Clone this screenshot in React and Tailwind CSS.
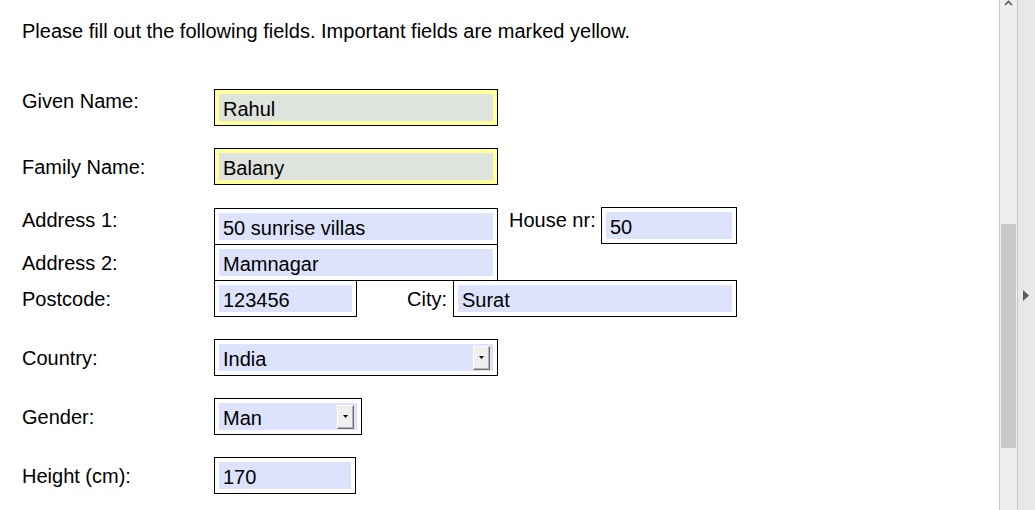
import React from 'react';

// Field box: black border, 4px ring (yellow for important ones), coloured inner field
function Field({ value, width, important, select, className = '' }) {
  const ring = important ? 'bg-[#ffff9c]' : 'bg-white';
  const inner = important ? 'bg-[#dfe3dd]' : 'bg-[#dde3fd]';
  return (
    <div className={`border border-black p-[4px] shrink-0 ${ring} ${width} ${className}`}>
      <div className={`h-[27px] flex items-center justify-between pl-[4px] pr-[3px] ${inner}`}>
        <span className="text-[20px] leading-[27px] pt-[3px] text-black whitespace-nowrap">{value}</span>
        {select && (
          <div className="w-[17px] h-[24px] bg-[#efefef] border-t border-l border-t-white border-l-white border-r border-b border-r-[#6d6d6d] border-b-[#6d6d6d] shadow-[inset_-1px_-1px_0_#b4b4b4] flex items-center justify-center">
            <svg width="5" height="3" viewBox="0 0 5 3">
              <path d="M0 0h5L2.5 3z" fill="#000" />
            </svg>
          </div>
        )}
      </div>
    </div>
  );
}

function Label({ children, top }) {
  return (
    <div className={`w-[192px] shrink-0 text-[20px] leading-[23px] pt-[1px] text-black ${top ? 'self-start' : ''}`}>
      {children}
    </div>
  );
}

export default function App() {
  return (
    <div className="w-[1035px] h-[510px] overflow-hidden flex bg-white" style={{ fontFamily: '"Liberation Sans", Arial, sans-serif' }}>
      <div className="w-[999px] shrink-0 pl-[22px] flex flex-col">
        <p className="pt-[20px] text-[20px] leading-[23px] text-black">
          Please fill out the following fields. Important fields are marked yellow.
        </p>

        <div className="mt-[46px] flex items-center">
          <Label top>Given Name:</Label>
          <Field value="Rahul" width="w-[284px]" important />
        </div>

        <div className="mt-[22px] flex items-center">
          <Label>Family Name:</Label>
          <Field value="Balany" width="w-[284px]" important />
        </div>

        <div className="mt-[23px] flex items-center">
          <Label top>Address 1:</Label>
          <Field value="50 sunrise villas" width="w-[284px]" />
          <div className="w-[103px] pl-[11px] pt-[1px] self-start text-[20px] leading-[23px] text-black">House nr:</div>
          <Field value="50" width="w-[136px]" className="-mt-px self-start" />
        </div>

        <div className="-mt-px flex items-center">
          <Label>Address 2:</Label>
          <Field value="Mamnagar" width="w-[284px]" />
        </div>

        <div className="-mt-px flex items-center">
          <Label>Postcode:</Label>
          <Field value="123456" width="w-[143px]" />
          <div className="w-[96px] pr-[6px] pt-[1px] text-right text-[20px] leading-[23px] text-black">City:</div>
          <Field value="Surat" width="w-[284px]" />
        </div>

        <div className="mt-[22px] flex items-center">
          <Label>Country:</Label>
          <Field value="India" width="w-[284px]" select />
        </div>

        <div className="mt-[22px] flex items-center">
          <Label>Gender:</Label>
          <Field value="Man" width="w-[148px]" select />
        </div>

        <div className="mt-[22px] flex items-center">
          <Label>Height (cm):</Label>
          <Field value="170" width="w-[142px]" />
        </div>
      </div>

      {/* vertical scrollbar */}
      <div className="w-[19px] shrink-0 border-l border-r border-[#c8c8c8] bg-[#efefef] flex flex-col">
        <svg width="17" height="6" viewBox="0 0 17 6" className="shrink-0">
          <path d="M5 5l3.5-3.5L12 5" stroke="#5a5a5a" strokeWidth="1.6" fill="none" />
        </svg>
        <div className="mt-[218px] mx-[1px] h-[224px] bg-[#c8c8c8]" />
      </div>

      {/* side panel */}
      <div className="flex-1 bg-[#e8e8e8] pt-[290px] pl-[5px]">
        <svg width="6" height="11" viewBox="0 0 6 11">
          <path d="M0 0l6 5.5L0 11z" fill="#5c5c5c" />
        </svg>
      </div>
    </div>
  );
}
